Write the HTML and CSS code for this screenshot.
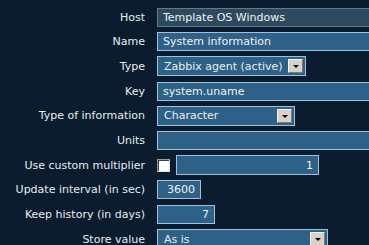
FILE: index.html
```html
<!DOCTYPE html>
<html lang="en">
<head>
    <meta charset="UTF-8">
    <title>Item configuration</title>
    <link rel="stylesheet" href="styles.css">
</head>
<body>
    <form class="item-form">
        <label class="field-label">Host</label>
        <div class="field"><input type="text" class="text wide readonly" value="Template OS Windows" readonly></div>

        <label class="field-label">Name</label>
        <div class="field"><input type="text" class="text wide" value="System information"></div>

        <label class="field-label">Type</label>
        <div class="field">
            <div class="select select-type"><span class="select-text">Zabbix agent (active)</span><span class="select-btn"><i class="arrow"></i></span></div>
        </div>

        <label class="field-label">Key</label>
        <div class="field"><input type="text" class="text wide" value="system.uname"></div>

        <label class="field-label">Type of information</label>
        <div class="field">
            <div class="select select-info"><span class="select-text">Character</span><span class="select-btn"><i class="arrow"></i></span></div>
        </div>

        <label class="field-label">Units</label>
        <div class="field"><input type="text" class="text wide" value=""></div>

        <label class="field-label">Use custom multiplier</label>
        <div class="field multiplier">
            <span class="checkbox"></span>
            <input type="text" class="text number mult-input" value="1">
        </div>

        <label class="field-label">Update interval (in sec)</label>
        <div class="field"><input type="text" class="text number delay" value="3600"></div>

        <label class="field-label">Keep history (in days)</label>
        <div class="field"><input type="text" class="text number history" value="7"></div>

        <label class="field-label">Store value</label>
        <div class="field">
            <div class="select select-store"><span class="select-text">As is</span><span class="select-btn"><i class="arrow"></i></span></div>
        </div>
    </form>
</body>
</html>
```
FILE: styles.css
```css
body {
    margin: 0;
    padding: 0;
    background-color: #0a1c2d;
    color: #e8edf1;
    font-family: "DejaVu Sans", Verdana, sans-serif;
    font-size: 11px;
    overflow: hidden;
}
.item-form {
    display: grid;
    grid-template-columns: 145px minmax(0, 1fr);
    grid-auto-rows: 20px;
    column-gap: 12px;
    row-gap: 4.7px;
    padding-top: 7px;
}
.field-label {
    display: flex;
    align-items: center;
    justify-content: flex-end;
    white-space: nowrap;
}
.field {
    display: flex;
    align-items: center;
    min-width: 0;
    overflow: hidden;
}
.text {
    box-sizing: border-box;
    height: 19px;
    margin: 0;
    padding: 0 5px;
    border: 1px solid #9fc2dc;
    background-color: #2e6187;
    color: #eef3f6;
    font-family: inherit;
    font-size: 11px;
    outline: none;
    flex-shrink: 0;
}
.wide {
    width: 260px;
}
.readonly {
    background-color: #2e4a5f;
    border-color: #5c7c92;
}
.number {
    text-align: right;
}
.delay {
    width: 44px;
}
.history {
    width: 58px;
}
.multiplier {
    gap: 6px;
}
.mult-input {
    width: 143px;
    height: 20px;
}
.checkbox {
    box-sizing: border-box;
    width: 13px;
    height: 13px;
    flex-shrink: 0;
    background-color: #ffffff;
    border: 1px solid #9a9a9a;
    border-right-color: #e0e0e0;
    border-bottom-color: #e0e0e0;
    box-shadow: inset 1px 1px 0 #404040;
}
.select {
    box-sizing: border-box;
    height: 20px;
    flex-shrink: 0;
    display: flex;
    align-items: center;
    justify-content: space-between;
    border: 1px solid #9fc2dc;
    background-color: #2e6187;
    padding: 0 2px 0 6px;
}
.select-type {
    width: 149px;
}
.select-info {
    width: 138px;
}
.select-store {
    width: 171px;
}
.select-text {
    white-space: nowrap;
}
.select-btn {
    box-sizing: border-box;
    width: 15px;
    height: 14px;
    display: flex;
    align-items: center;
    justify-content: center;
    background-color: #d8d2c8;
    border: 1px solid #f4f1ec;
    border-right-color: #807a72;
    border-bottom-color: #807a72;
}
.arrow {
    width: 0;
    height: 0;
    border-left: 3px solid transparent;
    border-right: 3px solid transparent;
    border-top: 3px solid #000000;
    margin-top: 1px;
}
```
